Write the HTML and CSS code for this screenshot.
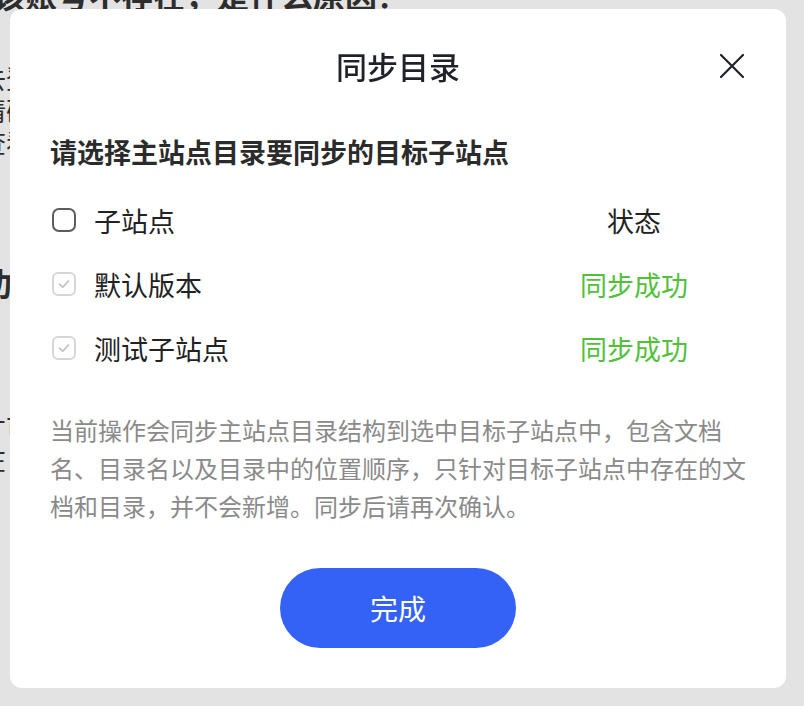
FILE: index.html
```html
<!DOCTYPE html>
<html>
	<head>
		<meta charset="UTF-8">
		<title>同步目录</title>
		<link rel="stylesheet" href="styles.css">
	</head>
	<body>
		<!-- 背景页面（被弹窗遮住） -->
		<div class="page">
			<h1 class="page-title">该账号不存在，是什么原因？</h1>
			<p class="page-line first">去登录账号</p>
			<p class="page-line">请确认！</p>
			<p class="page-line">查看更多</p>
			<h2 class="page-sub">功能说明</h2>
			<p class="page-line second">。</p>
			<p class="page-line gap">才可以</p>
			<p class="page-line">在：</p>
		</div>

		<div class="mask"></div>

		<div class="dialog">
			<div class="dialog-head">
				<span class="dialog-title">同步目录</span>
				<a class="dialog-close" href="javascript:;">
					<svg width="28" height="28" viewBox="0 0 28 28">
						<path d="M3 3 L25 25 M25 3 L3 25" stroke="#1f2329" stroke-width="2.2" stroke-linecap="round" fill="none"/>
					</svg>
				</a>
			</div>

			<div class="dialog-tip">请选择主站点目录要同步的目标子站点</div>

			<div class="site-list">
				<div class="site-row">
					<div class="site-name">
						<span class="check"></span>
						<span>子站点</span>
					</div>
					<div class="site-state">状态</div>
				</div>
				<div class="site-row">
					<div class="site-name">
						<span class="check check-done">
							<svg width="16" height="16" viewBox="0 0 16 16"><path d="M3.5 8.2 L6.8 11.2 L12.5 5" stroke="#c2c2c2" stroke-width="1.7" fill="none" stroke-linecap="round" stroke-linejoin="round"/></svg>
						</span>
						<span>默认版本</span>
					</div>
					<div class="site-state ok">同步成功</div>
				</div>
				<div class="site-row">
					<div class="site-name">
						<span class="check check-done">
							<svg width="16" height="16" viewBox="0 0 16 16"><path d="M3.5 8.2 L6.8 11.2 L12.5 5" stroke="#c2c2c2" stroke-width="1.7" fill="none" stroke-linecap="round" stroke-linejoin="round"/></svg>
						</span>
						<span>测试子站点</span>
					</div>
					<div class="site-state ok">同步成功</div>
				</div>
			</div>

			<p class="dialog-desc">当前操作会同步主站点目录结构到选中目标子站点中，包含文档名、目录名以及目录中的位置顺序，只针对目标子站点中存在的文档和目录，并不会新增。同步后请再次确认。</p>

			<div class="dialog-foot">
				<a class="btn-done" href="javascript:;">完成</a>
			</div>
		</div>
	</body>
</html>
```

FILE: styles.css
```css
*{
	margin: 0;
	padding: 0;
}

body{
	width: 804px;
	height: 706px;
	overflow: hidden;
	background-color: #ffffff;
	font-family: "Noto Sans CJK SC", "Noto Sans", sans-serif;
	color: #222222;
}

/* 背景页面 */
.page{
	margin-top: -26px;
	margin-left: -20px;
	color: #333333;
	white-space: nowrap;
}
.page-title{
	font-size: 32px;
	font-weight: 700;
	line-height: 40px;
	padding-left: 13px;
}
.page-line{
	font-size: 26px;
	line-height: 32px;
}
.page-line.first{
	margin-top: 48px;
}
.page-sub{
	font-size: 32px;
	font-weight: 700;
	line-height: 40px;
	margin-top: 104px;
}
.page-line.second{
	margin-top: 59px;
}
.page-line.gap{
	margin-top: 18px;
}

/* 遮罩 */
.mask{
	position: fixed;
	left: 0;
	top: 0;
	right: 0;
	bottom: 0;
	background-color: rgba(0, 0, 0, 0.11);
}

/* 弹窗 */
.dialog{
	position: fixed;
	left: 10px;
	top: 9px;
	width: 776px;
	height: 679px;
	box-sizing: border-box;
	padding: 0 40px 40px;
	background-color: #ffffff;
	border-radius: 12px;
	display: flex;
	flex-direction: column;
}

.dialog-head{
	height: 114px;
	display: flex;
	align-items: center;
	justify-content: center;
	position: relative;
}
.dialog-title{
	font-size: 31px;
	font-weight: 500;
	color: #1f2329;
	line-height: 40px;
}
.dialog-close{
	position: absolute;
	right: 0;
	top: 43px;
	width: 28px;
	height: 28px;
	display: block;
}

.dialog-tip{
	margin-top: 9px;
	font-size: 27px;
	font-weight: 600;
	line-height: 40px;
	color: #2b2b2b;
}

.site-list{
	margin-top: 16px;
}
.site-row{
	height: 64px;
	display: grid;
	grid-template-columns: 1fr 224px;
	align-items: center;
	font-size: 27px;
}
.site-name{
	display: flex;
	align-items: center;
}
.check{
	width: 24px;
	height: 24px;
	box-sizing: border-box;
	border: 2.5px solid #5c5c5c;
	border-radius: 7px;
	margin: 0 18px 0 2px;
	display: flex;
	align-items: center;
	justify-content: center;
}
.check-done{
	border: 2px solid #d6d6d6;
	border-radius: 6px;
}
.site-state{
	text-align: center;
	color: #222222;
}
.site-state.ok{
	color: #52c03a;
}

.dialog-desc{
	margin-top: 31px;
	font-size: 24px;
	line-height: 38px;
	color: #8a8a8a;
}

.dialog-foot{
	margin-top: 43px;
	display: flex;
	justify-content: center;
}
.btn-done{
	width: 236px;
	height: 80px;
	border-radius: 40px;
	background-color: #3462f6;
	color: #ffffff;
	font-size: 28px;
	text-decoration: none;
	display: flex;
	align-items: center;
	justify-content: center;
}
```
